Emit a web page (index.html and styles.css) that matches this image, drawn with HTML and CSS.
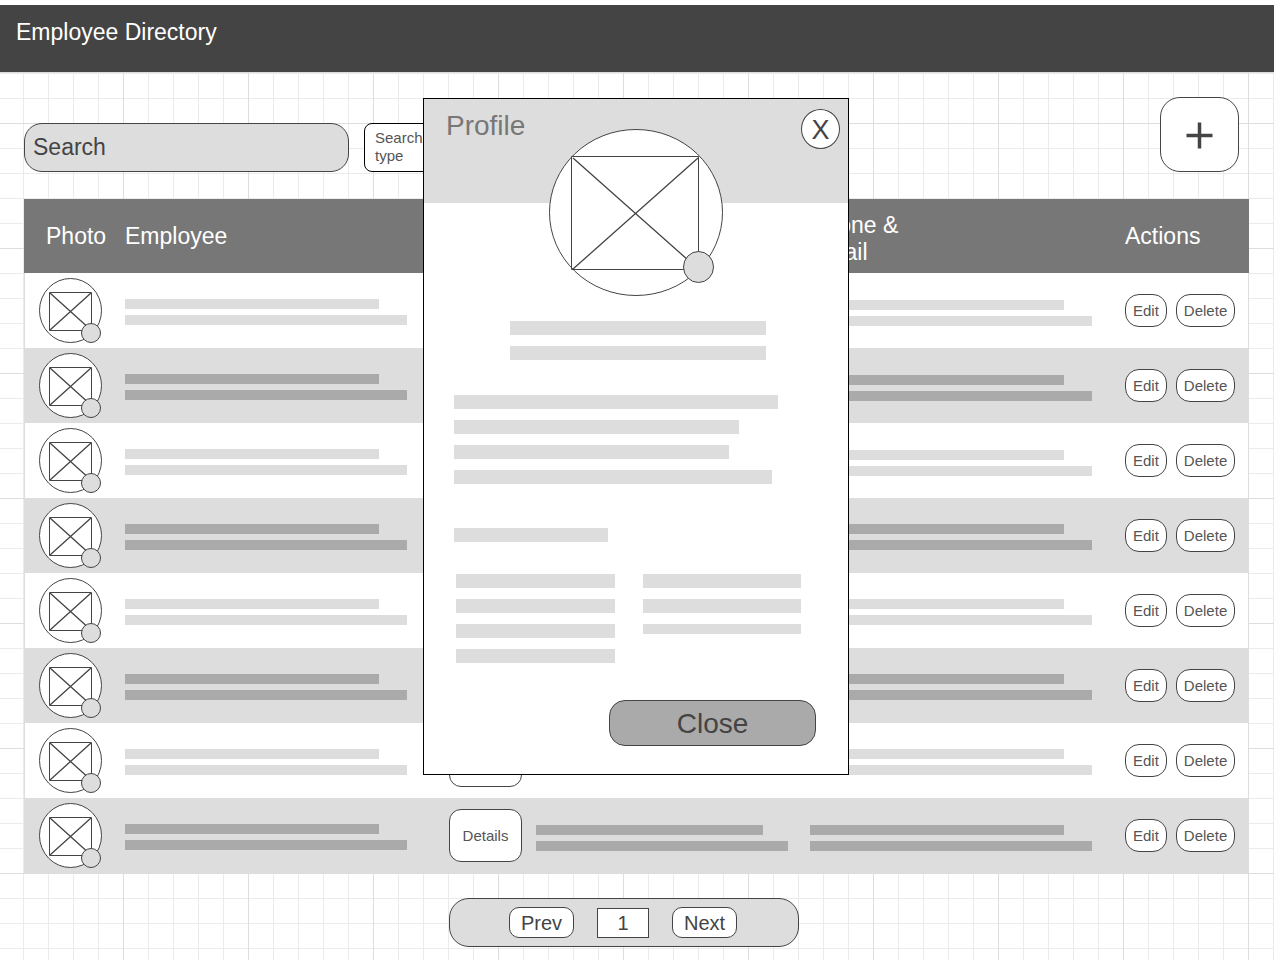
FILE: index.html
```html
<!DOCTYPE html>
<html lang="en">
<head>
<meta charset="utf-8">
<meta name="viewport" content="width=device-width, initial-scale=1">
<title>Employee Directory</title>
<link rel="stylesheet" href="styles.css">
</head>
<body>
<svg class="sprite" aria-hidden="true">
  <symbol id="avatar" viewBox="0 0 63 65">
    <ellipse cx="31.5" cy="32.5" rx="31" ry="32" fill="#fff"/>
    <path d="M10.5 14.5h42v38h-42z" fill="none"/>
    <path d="M11 15L52 52M52 15L11 52" fill="none" stroke-width="1.3"/>
    <circle cx="52" cy="55" r="9.5" fill="#ddd"/>
  </symbol>
</svg>
<header class="topbar"><h1 class="topbar-title">Employee Directory</h1></header>
<main class="page">
  <div class="toolbar">
    <input class="search" type="text" placeholder="Search" aria-label="Search">
    <button class="search-type" type="button" aria-haspopup="listbox">Search type</button>
    <button class="add" type="button" aria-label="Add employee">
      <svg width="27" height="27" viewBox="0 0 27 27"><path d="M0.5 13.5h26M13.5 0.5v26" stroke="#444" stroke-width="3.5"/></svg>
    </button>
  </div>
  <table class="directory">
    <colgroup><col class="col-photo"><col class="col-employee"><col class="col-details"><col class="col-role"><col class="col-contact"><col class="col-actions"></colgroup>
    <thead>
      <tr><th class="photo-head">Photo</th><th>Employee</th><th></th><th></th><th class="contact-head">Phone &amp;<br>Email</th><th class="actions-head">Actions</th></tr>
    </thead>
    <tbody>
      <tr><td class="photo"><svg class="avatar"><use href="#avatar"/></svg></td><td><div class="lines"><i class="line w254"></i><i class="line w282"></i></div></td><td><button class="details" type="button">Details</button></td><td><div class="lines low"><i class="line w227"></i><i class="line w252"></i></div></td><td><div class="lines low"><i class="line w254"></i><i class="line w282"></i></div></td><td><div class="actions"><button class="pill" type="button">Edit</button><button class="pill" type="button">Delete</button></div></td></tr>
      <tr><td class="photo"><svg class="avatar"><use href="#avatar"/></svg></td><td><div class="lines"><i class="line w254"></i><i class="line w282"></i></div></td><td><button class="details" type="button">Details</button></td><td><div class="lines low"><i class="line w227"></i><i class="line w252"></i></div></td><td><div class="lines low"><i class="line w254"></i><i class="line w282"></i></div></td><td><div class="actions"><button class="pill" type="button">Edit</button><button class="pill" type="button">Delete</button></div></td></tr>
      <tr><td class="photo"><svg class="avatar"><use href="#avatar"/></svg></td><td><div class="lines"><i class="line w254"></i><i class="line w282"></i></div></td><td><button class="details" type="button">Details</button></td><td><div class="lines low"><i class="line w227"></i><i class="line w252"></i></div></td><td><div class="lines low"><i class="line w254"></i><i class="line w282"></i></div></td><td><div class="actions"><button class="pill" type="button">Edit</button><button class="pill" type="button">Delete</button></div></td></tr>
      <tr><td class="photo"><svg class="avatar"><use href="#avatar"/></svg></td><td><div class="lines"><i class="line w254"></i><i class="line w282"></i></div></td><td><button class="details" type="button">Details</button></td><td><div class="lines"><i class="line w227"></i><i class="line w252"></i></div></td><td><div class="lines"><i class="line w254"></i><i class="line w282"></i></div></td><td><div class="actions"><button class="pill" type="button">Edit</button><button class="pill" type="button">Delete</button></div></td></tr>
      <tr><td class="photo"><svg class="avatar"><use href="#avatar"/></svg></td><td><div class="lines"><i class="line w254"></i><i class="line w282"></i></div></td><td><button class="details" type="button">Details</button></td><td><div class="lines"><i class="line w227"></i><i class="line w252"></i></div></td><td><div class="lines"><i class="line w254"></i><i class="line w282"></i></div></td><td><div class="actions"><button class="pill" type="button">Edit</button><button class="pill" type="button">Delete</button></div></td></tr>
      <tr><td class="photo"><svg class="avatar"><use href="#avatar"/></svg></td><td><div class="lines"><i class="line w254"></i><i class="line w282"></i></div></td><td><button class="details" type="button">Details</button></td><td><div class="lines"><i class="line w227"></i><i class="line w252"></i></div></td><td><div class="lines"><i class="line w254"></i><i class="line w282"></i></div></td><td><div class="actions"><button class="pill" type="button">Edit</button><button class="pill" type="button">Delete</button></div></td></tr>
      <tr><td class="photo"><svg class="avatar"><use href="#avatar"/></svg></td><td><div class="lines"><i class="line w254"></i><i class="line w282"></i></div></td><td><button class="details" type="button">Details</button></td><td><div class="lines"><i class="line w227"></i><i class="line w252"></i></div></td><td><div class="lines"><i class="line w254"></i><i class="line w282"></i></div></td><td><div class="actions"><button class="pill" type="button">Edit</button><button class="pill" type="button">Delete</button></div></td></tr>
      <tr><td class="photo"><svg class="avatar"><use href="#avatar"/></svg></td><td><div class="lines"><i class="line w254"></i><i class="line w282"></i></div></td><td><button class="details" type="button">Details</button></td><td><div class="lines low"><i class="line w227"></i><i class="line w252"></i></div></td><td><div class="lines low"><i class="line w254"></i><i class="line w282"></i></div></td><td><div class="actions"><button class="pill" type="button">Edit</button><button class="pill" type="button">Delete</button></div></td></tr>
    </tbody>
  </table>
  <nav class="pager" aria-label="Pages">
    <button class="page-button" type="button">Prev</button>
    <input class="page-number" type="text" value="1" aria-label="Page number">
    <button class="page-button" type="button">Next</button>
  </nav>
</main>
<section class="profile" role="dialog" aria-labelledby="profile-title">
  <header class="profile-head">
    <h2 class="profile-title" id="profile-title">Profile</h2>
    <button class="dismiss" type="button" aria-label="Close profile">X</button>
  </header>
  <svg class="portrait" viewBox="0 0 174 167" aria-hidden="true">
    <ellipse cx="87" cy="83.5" rx="86.5" ry="83" fill="#fff"/>
    <path d="M22.5 27.5h127v113h-127z" fill="none"/>
    <path d="M24 29L148 139M149 29L24 140" fill="none" stroke-width="1.3"/>
    <ellipse cx="149.5" cy="138" rx="15" ry="15.5" fill="#ddd"/>
  </svg>
  <div class="bars name"><i class="bar"></i><i class="bar"></i></div>
  <div class="bars about"><i class="bar w324"></i><i class="bar w285"></i><i class="bar w275"></i><i class="bar w318"></i></div>
  <div class="bars subhead"><i class="bar w154"></i></div>
  <div class="facts">
    <div class="bars"><i class="bar"></i><i class="bar"></i><i class="bar"></i><i class="bar"></i></div>
    <div class="bars"><i class="bar"></i><i class="bar"></i><i class="bar thin"></i></div>
  </div>
  <button class="close" type="button">Close</button>
</section>
</body>
</html>
```
FILE: styles.css
```css
* { box-sizing: border-box; }

body {
  position: relative;
  display: flex;
  flex-direction: column;
  min-height: 100vh;
  margin: 0;
  padding-top: 5px;
  background: #fff;
  color: #444;
  font-family: "Liberation Sans", Arial, sans-serif;
}

button, input {
  margin: 0;
  padding: 0;
  border: 1px solid #444;
  background: #fff;
  color: #444;
  font-family: inherit;
}

h1, h2 { margin: 0; font-weight: 400; }

.sprite { position: absolute; width: 0; height: 0; }

.topbar {
  height: 67px;
  padding: 14px 16px;
  background: #444;
  color: #fff;
}

.topbar-title { font-size: 23px; line-height: 27px; }

/* Graph paper: a fine line each 25px, a stronger one each 125px */
.page {
  flex: 1;
  padding: 24px 25px 13px 24px;
  border-top: 1px solid #ddd;
  background-image:
    linear-gradient(to right, #ddd 1px, transparent 1px),
    linear-gradient(#ddd 1px, transparent 1px),
    linear-gradient(to right, #ebebeb 1px, transparent 1px),
    linear-gradient(#ebebeb 1px, transparent 1px);
  background-size: 125px 125px, 125px 125px, 25px 25px, 25px 25px;
  background-position: 123px 0, 0 50px, 23px 0, 0 0;
}

.toolbar {
  display: flex;
  align-items: flex-end;
  gap: 15px;
  padding-right: 10px;
  margin-bottom: 27px;
}

.search {
  width: 325px;
  height: 49px;
  padding: 0 8px;
  border-radius: 18px;
  background: #ddd;
  font-size: 23px;
}

.search::placeholder { color: #444; opacity: 1; }

.search-type {
  width: 84px;
  height: 49px;
  padding: 0 10px 2px;
  border-color: #000;
  border-radius: 8px;
  color: #555;
  font-size: 15px;
  line-height: 18px;
  text-align: left;
}

.add {
  display: flex;
  align-items: center;
  justify-content: center;
  width: 79px;
  height: 75px;
  margin-left: auto;
  padding-top: 2px;
  border-radius: 20px;
}

.directory {
  width: 100%;
  table-layout: fixed;
  border-spacing: 0;
  border-bottom: 1px solid #ddd;
}

.col-photo { width: 101px; }
.col-employee { width: 324px; }
.col-details { width: 87px; }
.col-role { width: 274px; }
.col-contact { width: 315px; }
.col-actions { width: 124px; }

.directory th {
  height: 74px;
  padding: 0;
  background: #777;
  color: #fff;
  font-size: 23px;
  font-weight: 400;
  line-height: 27px;
  text-align: left;
}

.directory .photo-head { padding-left: 22px; }
.directory .contact-head { padding-top: 5px; }
.directory .actions-head { padding-right: 52px; text-align: right; }

.directory td {
  height: 75px;
  padding: 0;
  background: #fff;
}

.directory tr:nth-child(even) td { background: #ddd; }
.directory td:first-child { border-left: 1px solid #ddd; }
.directory td:last-child { border-right: 1px solid #ddd; }
.directory .photo { padding-left: 14px; }

.avatar {
  display: block;
  width: 63px;
  height: 65px;
  stroke: #444;
}

.lines { display: grid; gap: 6px; padding-top: 3px; }
.low { padding-top: 5px; }
.line { height: 10px; max-width: 100%; background: #ddd; }
tr:nth-child(even) .line { background: #aaa; }
.w227 { width: 227px; }
.w252 { width: 252px; }
.w254 { width: 254px; }
.w282 { width: 282px; }

.details {
  display: block;
  width: 73px;
  height: 53px;
  border-radius: 12px;
  color: #555;
  font-size: 15px;
}

.actions { display: flex; gap: 9px; }

.pill {
  height: 33px;
  padding: 0 7px;
  border-radius: 14px;
  color: #555;
  font-size: 15px;
}

.pager {
  display: flex;
  align-items: center;
  gap: 23px;
  width: 350px;
  height: 49px;
  margin: 24px 0 0 425px;
  padding: 0 59px;
  border: 1px solid #444;
  border-radius: 20px;
  background: #ddd;
}

.page-button {
  width: 65px;
  height: 31px;
  padding-top: 2px;
  border-radius: 10px;
  font-size: 20px;
}

.page-number {
  width: 52px;
  height: 30px;
  padding-top: 2px;
  font-size: 20px;
  text-align: center;
}

.profile {
  position: absolute;
  top: 98px;
  left: 50%;
  display: flex;
  flex-direction: column;
  width: 426px;
  margin-left: -214px;
  padding-bottom: 28px;
  border: 1px solid #000;
  background: #fff;
}

.profile-head {
  display: flex;
  align-items: flex-start;
  justify-content: space-between;
  height: 104px;
  padding: 10px 8px 0 22px;
  background: #ddd;
}

.profile-title { color: #777; font-size: 28px; line-height: 34px; }

.dismiss {
  width: 39px;
  height: 40px;
  padding-top: 3px;
  border-radius: 50%;
  font-size: 27px;
}

.portrait {
  align-self: center;
  width: 174px;
  height: 167px;
  margin: -74px 0 25px;
  stroke: #444;
}

.bars { display: grid; gap: 11px; align-content: start; }
.bar { height: 14px; max-width: 100%; background: #ddd; }
.thin { height: 10px; }
.name { width: 256px; margin-left: 86px; }
.about { margin: 35px 30px 44px; }
.subhead { margin: 0 30px 32px; }
.w154 { width: 154px; }
.w275 { width: 275px; }
.w285 { width: 285px; }
.w318 { width: 318px; }
.w324 { width: 324px; }

.facts {
  display: grid;
  grid-template-columns: 1fr 1fr;
  gap: 28px;
  margin: 0 47px 37px 32px;
}

.close {
  align-self: flex-end;
  width: 207px;
  height: 46px;
  margin-right: 32px;
  padding-top: 2px;
  border-radius: 16px;
  background: #aaa;
  font-size: 28px;
}
```
